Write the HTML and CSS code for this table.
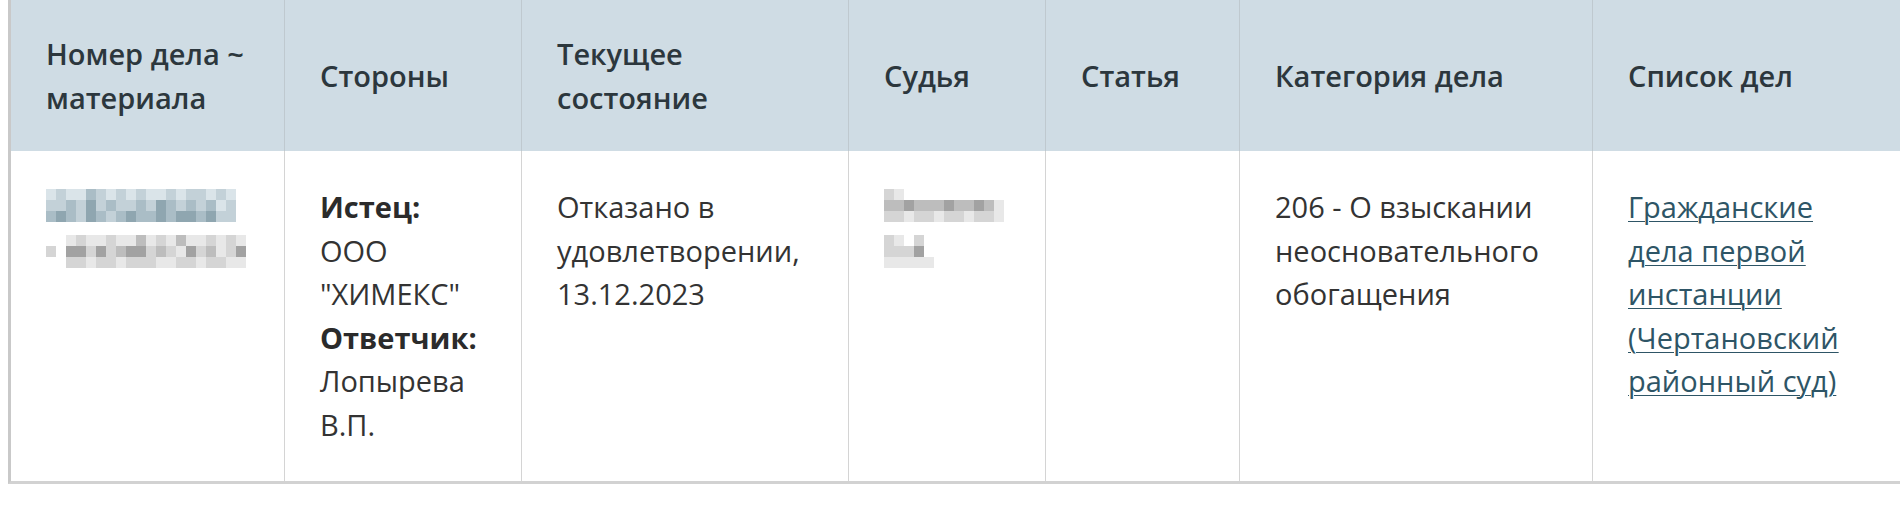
FILE: index.html
```html
<!DOCTYPE html>
<html lang="ru">
<head>
<meta charset="utf-8">
<title>Дела</title>
<link rel="stylesheet" href="styles.css">
</head>
<body>
<table class="cases">
  <colgroup>
    <col class="c-num">
    <col class="c-sides">
    <col class="c-state">
    <col class="c-judge">
    <col class="c-article">
    <col class="c-cat">
    <col class="c-list">
  </colgroup>
  <thead>
    <tr>
      <th>Номер дела ~ материала</th>
      <th>Стороны</th>
      <th>Текущее состояние</th>
      <th>Судья</th>
      <th>Статья</th>
      <th>Категория дела</th>
      <th>Список дел</th>
    </tr>
  </thead>
  <tbody>
    <tr>
      <td>
        <div class="mosaic m-link m-w19">
          <i class="a"></i><i class="b"></i><i class="a"></i><i class="a"></i><i class="c"></i><i class="b"></i><i class="a"></i><i class="b"></i><i class="a"></i><i class="b"></i><i class="a"></i><i class="a"></i><i class="b"></i><i class="a"></i><i class="b"></i><i class="b"></i><i class="a"></i><i class="b"></i><i class="a"></i>
          <i class="b"></i><i class="b"></i><i class="c"></i><i class="b"></i><i class="d"></i><i class="b"></i><i class="c"></i><i class="b"></i><i class="b"></i><i class="c"></i><i class="b"></i><i class="d"></i><i class="c"></i><i class="b"></i><i class="c"></i><i class="b"></i><i class="c"></i><i class="a"></i><i class="b"></i>
          <i class="c"></i><i class="d"></i><i class="c"></i><i class="b"></i><i class="d"></i><i class="c"></i><i class="b"></i><i class="c"></i><i class="d"></i><i class="c"></i><i class="c"></i><i class="d"></i><i class="c"></i><i class="d"></i><i class="d"></i><i class="c"></i><i class="d"></i><i class="b"></i><i class="b"></i>
        </div>
        <div class="mosaic m-grey m-w20">
          <i class="o"></i><i class="o"></i><i class="a"></i><i class="b"></i><i class="a"></i><i class="a"></i><i class="b"></i><i class="a"></i><i class="a"></i><i class="c"></i><i class="a"></i><i class="b"></i><i class="a"></i><i class="c"></i><i class="a"></i><i class="a"></i><i class="b"></i><i class="a"></i><i class="b"></i><i class="a"></i>
          <i class="b"></i><i class="o"></i><i class="d"></i><i class="d"></i><i class="b"></i><i class="d"></i><i class="b"></i><i class="c"></i><i class="d"></i><i class="d"></i><i class="b"></i><i class="c"></i><i class="b"></i><i class="a"></i><i class="d"></i><i class="b"></i><i class="c"></i><i class="a"></i><i class="b"></i><i class="d"></i>
          <i class="o"></i><i class="o"></i><i class="b"></i><i class="b"></i><i class="a"></i><i class="b"></i><i class="b"></i><i class="a"></i><i class="b"></i><i class="b"></i><i class="b"></i><i class="a"></i><i class="a"></i><i class="b"></i><i class="b"></i><i class="a"></i><i class="b"></i><i class="b"></i><i class="a"></i><i class="a"></i>
        </div>
      </td>
      <td>
        <b>Истец:</b><br>ООО "ХИМЕКС"<br>
        <b>Ответчик:</b><br>Лопырева В.П.
      </td>
      <td>Отказано в удовлетворении, 13.12.2023</td>
      <td>
        <div class="mosaic m-grey m-w12">
          <i class="b"></i><i class="a"></i><i class="o"></i><i class="o"></i><i class="o"></i><i class="o"></i><i class="o"></i><i class="o"></i><i class="o"></i><i class="o"></i><i class="o"></i><i class="o"></i>
          <i class="c"></i><i class="c"></i><i class="d"></i><i class="c"></i><i class="c"></i><i class="c"></i><i class="d"></i><i class="c"></i><i class="c"></i><i class="d"></i><i class="c"></i><i class="a"></i>
          <i class="b"></i><i class="b"></i><i class="a"></i><i class="b"></i><i class="b"></i><i class="a"></i><i class="b"></i><i class="b"></i><i class="a"></i><i class="b"></i><i class="b"></i><i class="a"></i>
        </div>
        <div class="mosaic m-grey m-w6">
          <i class="b"></i><i class="a"></i><i class="o"></i><i class="b"></i><i class="o"></i><i class="o"></i>
          <i class="b"></i><i class="b"></i><i class="b"></i><i class="d"></i><i class="o"></i><i class="o"></i>
          <i class="a"></i><i class="a"></i><i class="a"></i><i class="a"></i><i class="a"></i><i class="o"></i>
        </div>
      </td>
      <td></td>
      <td>206 - О взыскании неосновательного обогащения</td>
      <td><a href="#">Гражданские дела первой инстанции (Чертановский районный суд)</a></td>
    </tr>
  </tbody>
</table>
</body>
</html>
```
FILE: styles.css
```css
html {
  overflow: hidden;
}

body {
  margin: 0;
  background: #ffffff;
  font-family: "Open Sans", "Noto Sans", sans-serif;
  font-size: 29px;
  line-height: 1.5;
  color: #333333;
}

.cases {
  margin-left: 8px;
  border-collapse: separate;
  border-spacing: 0;
  table-layout: fixed;
  width: 1895px;
  border-left: 3px solid #c9c9c9;
  border-bottom: 3px solid #d2d2d2;
}

.c-num { width: 274px; }
.c-sides { width: 237px; }
.c-state { width: 327px; }
.c-judge { width: 197px; }
.c-article { width: 194px; }
.c-cat { width: 353px; }
.c-list { width: 310px; }

.cases th {
  background: #cfdce4;
  color: #2c373d;
  font-weight: 600;
  text-align: left;
  vertical-align: middle;
  padding: 32px 28px 32px 35px;
  border-right: 1px solid #bfc9cf;
}

.cases td {
  vertical-align: top;
  padding: 34px 30px 35px 35px;
  border-right: 1px solid #d4d4d4;
  color: #333333;
}

.cases td b {
  font-weight: 700;
  color: #2b2b2b;
}

.cases a {
  color: #2e5566;
  text-decoration: underline;
  text-underline-offset: 3px;
  text-decoration-thickness: 1px;
}

.mosaic {
  display: grid;
  grid-auto-rows: 11px;
  margin-bottom: 13px;
}

.m-w19 { grid-template-columns: repeat(19, 10px); margin-top: 4px; }
.m-w20 { grid-template-columns: repeat(20, 10px); }
.m-w12 { grid-template-columns: repeat(12, 10px); margin-top: 4px; }
.m-w6 { grid-template-columns: repeat(6, 10px); }

.mosaic i { display: block; }
.mosaic i.o { background: transparent; }

.m-link i.a { background: #dae4e9; }
.m-link i.b { background: #c3d1d8; }
.m-link i.c { background: #aabdc6; }
.m-link i.d { background: #8fa6b0; }

.m-grey i.a { background: #e8e8e8; }
.m-grey i.b { background: #d5d5d5; }
.m-grey i.c { background: #bdbdbd; }
.m-grey i.d { background: #a2a2a2; }
```
